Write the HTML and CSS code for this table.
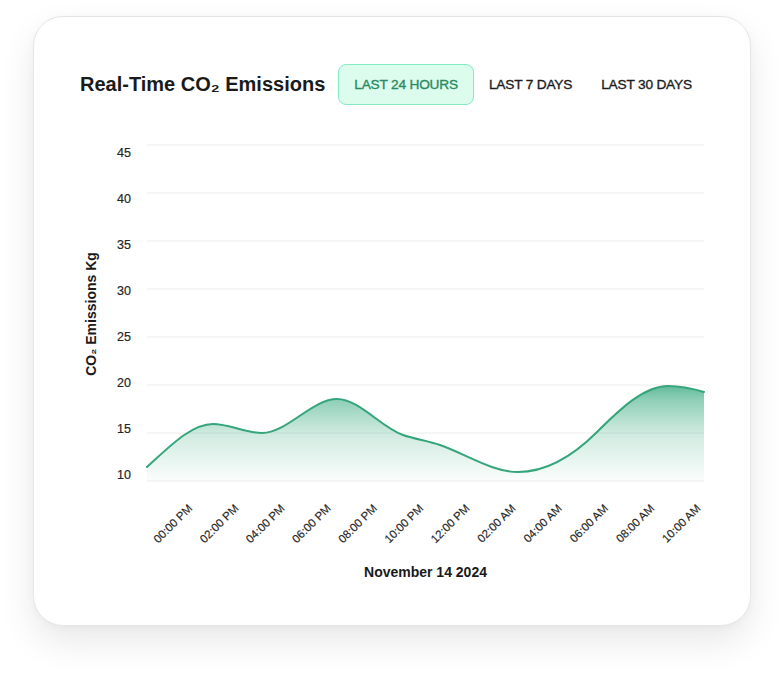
FILE: index.html
```html
<!DOCTYPE html>
<html lang="en">
<head>
<meta charset="utf-8">
<title>Real-Time CO₂ Emissions</title>
<link rel="stylesheet" href="styles.css">
</head>
<body>
<div class="card">
  <div class="header">
    <h1 class="title">Real-Time CO₂ Emissions</h1>
    <div class="tabs">
      <button class="tab active">LAST 24 HOURS</button>
      <button class="tab">LAST 7 DAYS</button>
      <button class="tab">LAST 30 DAYS</button>
    </div>
  </div>
  <svg class="chart" viewBox="34 105 716 519" width="716" height="519">
    <defs>
      <linearGradient id="fillGrad" gradientUnits="userSpaceOnUse" x1="0" y1="386" x2="0" y2="481">
        <stop offset="0" stop-color="#3aaa80" stop-opacity="0.8"/>
        <stop offset="0.15" stop-color="#3aaa80" stop-opacity="0.56"/>
        <stop offset="0.5" stop-color="#3aaa80" stop-opacity="0.24"/>
        <stop offset="1" stop-color="#3aaa80" stop-opacity="0.02"/>
      </linearGradient>
    </defs>
    <g class="grid">
      <line x1="147" y1="145" x2="704" y2="145"/>
      <line x1="147" y1="193" x2="704" y2="193"/>
      <line x1="147" y1="241" x2="704" y2="241"/>
      <line x1="147" y1="289" x2="704" y2="289"/>
      <line x1="147" y1="337" x2="704" y2="337"/>
      <line x1="147" y1="385" x2="704" y2="385"/>
      <line x1="147" y1="433" x2="704" y2="433"/>
      <line x1="147" y1="481" x2="704" y2="481"/>
    </g>
    <path class="area" d="M147,467 C169,447.2 191,424 213,424 C229.3,424 245.7,433 262,433 C287,433 312,399 337,399 C359,399 381,427.3 403,435 C415.3,439.3 427.7,440.7 440,445 C466,454.1 492,472 518,472 C544.3,472 570.7,458.3 597,432 C620.7,408.3 644.3,386 668,386 C680,386 692,388.4 704,392 L704,481 L147,481 Z"/>
    <path class="line" d="M147,467 C169,447.2 191,424 213,424 C229.3,424 245.7,433 262,433 C287,433 312,399 337,399 C359,399 381,427.3 403,435 C415.3,439.3 427.7,440.7 440,445 C466,454.1 492,472 518,472 C544.3,472 570.7,458.3 597,432 C620.7,408.3 644.3,386 668,386 C680,386 692,388.4 704,392"/>
    <g class="ylabels">
      <text x="131" y="157">45</text>
      <text x="131" y="203">40</text>
      <text x="131" y="249">35</text>
      <text x="131" y="295">30</text>
      <text x="131" y="341">25</text>
      <text x="131" y="387">20</text>
      <text x="131" y="433">15</text>
      <text x="131" y="479">10</text>
    </g>
    <g class="xlabels">
      <text transform="translate(193,509) rotate(-45)">00:00 PM</text>
      <text transform="translate(239.2,509) rotate(-45)">02:00 PM</text>
      <text transform="translate(285.4,509) rotate(-45)">04:00 PM</text>
      <text transform="translate(331.6,509) rotate(-45)">06:00 PM</text>
      <text transform="translate(377.8,509) rotate(-45)">08:00 PM</text>
      <text transform="translate(424,509) rotate(-45)">10:00 PM</text>
      <text transform="translate(470.2,509) rotate(-45)">12:00 PM</text>
      <text transform="translate(516.4,509) rotate(-45)">02:00 AM</text>
      <text transform="translate(562.6,509) rotate(-45)">04:00 AM</text>
      <text transform="translate(608.8,509) rotate(-45)">06:00 AM</text>
      <text transform="translate(655,509) rotate(-45)">08:00 AM</text>
      <text transform="translate(701.2,509) rotate(-45)">10:00 AM</text>
    </g>
    <text class="axis-title" transform="translate(96,314) rotate(-90)">CO₂ Emissions Kg</text>
    <text class="axis-title" x="425.5" y="577">November 14 2024</text>
  </svg>
</div>
</body>
</html>
```

FILE: styles.css
```css
html, body {
  margin: 0;
  background: #ffffff;
}

body {
  padding: 16px 0 50px 33px;
  font-family: "Liberation Sans", Arial, sans-serif;
  color: #1c1c1c;
}

.card {
  width: 718px;
  height: 610px;
  box-sizing: border-box;
  background: #ffffff;
  border: 1px solid #e6e6e6;
  border-radius: 30px;
  box-shadow: 0 16px 36px rgba(0, 0, 0, 0.09), 0 2px 8px rgba(0, 0, 0, 0.03);
  overflow: hidden;
}

.header {
  display: flex;
  align-items: center;
  padding: 47px 0 0 46px;
  height: 41px;
}

.title {
  margin: 0 13px 0 0;
  font-size: 20px;
  font-weight: 700;
  color: #1a1a1a;
  white-space: nowrap;
}

.tabs {
  display: flex;
  align-items: center;
  gap: 1px;
}

.tab {
  height: 41px;
  box-sizing: border-box;
  padding: 0 13px;
  margin: 0;
  border: 1px solid transparent;
  border-radius: 8px;
  background: transparent;
  font-family: "Liberation Sans", Arial, sans-serif;
  font-size: 13.7px;
  letter-spacing: -0.2px;
  font-weight: 400;
  color: #1c1c1c;
  -webkit-text-stroke: 0.35px currentColor;
  white-space: nowrap;
  cursor: pointer;
}

.tab.active {
  padding: 0 15px;
  background: #dcfcee;
  border-color: #84ebc3;
  color: #2b8a61;
}

.chart {
  display: block;
}

.grid line {
  stroke: #ececec;
  stroke-width: 1;
}

.area {
  fill: url(#fillGrad);
  stroke: none;
}

.line {
  fill: none;
  stroke: #35a67b;
  stroke-width: 2;
  stroke-linejoin: round;
  stroke-linecap: round;
}

.ylabels text {
  font-family: "Liberation Sans", Arial, sans-serif;
  font-size: 12.5px;
  fill: #262626;
  stroke: #262626;
  stroke-width: 0.2px;
  text-anchor: end;
}

.xlabels text {
  font-family: "Liberation Sans", Arial, sans-serif;
  font-size: 11.5px;
  fill: #262626;
  stroke: #262626;
  stroke-width: 0.15px;
  text-anchor: end;
}

.axis-title {
  font-family: "Liberation Sans", Arial, sans-serif;
  font-size: 14px;
  font-weight: 700;
  fill: #1a1a1a;
  text-anchor: middle;
}
```
